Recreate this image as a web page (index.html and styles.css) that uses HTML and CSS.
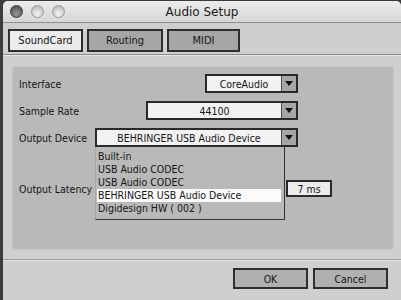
FILE: index.html
```html
<!DOCTYPE html>
<html>
<head>
<meta charset="utf-8">
<link rel="stylesheet" href="styles.css">
</head>
<body>
<div class="screen">
  <div class="edge"></div>
  <div class="window">
    <div class="titlebar">
      <div class="lights">
        <span class="light dark"></span>
        <span class="light"></span>
        <span class="light"></span>
      </div>
      <div class="title">Audio Setup</div>
      <div></div>
    </div>
    <div class="tabs">
      <div class="tab active w1">SoundCard</div>
      <div class="tab w2">Routing</div>
      <div class="tab w3">MIDI</div>
    </div>
    <div class="content">
      <div class="panel">
        <div class="row r1">
          <span class="label">Interface</span>
          <div class="combo c1"><span class="field">CoreAudio</span><span class="arrow"></span></div>
        </div>
        <div class="row r2">
          <span class="label">Sample Rate</span>
          <div class="combo c2"><span class="field">44100</span><span class="arrow"></span></div>
        </div>
        <div class="row r3">
          <span class="label">Output Device</span>
          <div class="combo c3"><span class="field">BEHRINGER USB Audio Device</span><span class="arrow"></span>
            <ul class="menu">
              <li>Built-in</li>
              <li>USB Audio CODEC</li>
              <li>USB Audio CODEC</li>
              <li class="sel">BEHRINGER USB Audio Device</li>
              <li>Digidesign HW ( 002 )</li>
            </ul>
          </div>
        </div>
        <div class="row r4">
          <span class="label">Output Latency</span>
          <div class="box">7 ms</div>
        </div>
      </div>
    </div>
    <div class="footer">
      <div class="btn">OK</div>
      <div class="btn">Cancel</div>
    </div>
  </div>
</div>
</body>
</html>
```
FILE: styles.css
```css
* { box-sizing: border-box; }
html, body { margin: 0; padding: 0; }
body {
  width: 401px; height: 300px; overflow: hidden;
  background: #3a3a3a;
  font-family: "DejaVu Sans Condensed", "DejaVu Sans", sans-serif;
  font-stretch: condensed;
  font-size: 10.5px;
  color: #151515;
}
.screen { display: flex; height: 300px; }
.edge { width: 3px; background: #3c3c3c; }
.window {
  flex: 1;
  display: flex; flex-direction: column;
  background: #cfcfcf;
  border-radius: 5px 5px 0 0;
  margin-top: 1px;
  overflow: hidden;
}
.titlebar {
  height: 22px;
  display: grid;
  grid-template-columns: 1fr auto 1fr;
  align-items: center;
  background: linear-gradient(#ececec, #d6d6d6);
  border-bottom: 1px solid #8e8e8e;
}
.lights { display: flex; gap: 8px; padding-left: 7px; margin-top: -1px; }
.light {
  width: 13px; height: 13px; border-radius: 50%;
  background: radial-gradient(circle at 50% 70%, #f4f4f4, #c4c4c4 70%, #a8a8a8);
  border: 1px solid #9a9a9a;
}
.light.dark {
  background: radial-gradient(circle at 50% 70%, #9a9a9a, #5a5a5a 70%, #444);
  border-color: #3a3a3a;
}
.title {
  font-family: "DejaVu Sans", sans-serif;
  font-stretch: normal;
  font-size: 12px; color: #1a1a1a; padding-top: 1px;
}
.tabs {
  display: flex; gap: 4px;
  padding: 6px 0 0 5px;
  height: 32px;
  border-bottom: 1px solid #8a8a8a;
  box-shadow: 0 1px 0 #e6e6e6;
}
.tab {
  height: 23px;
  border: 2px solid #2e2e2e;
  background: #a6a6a6;
  display: flex; align-items: center; justify-content: center;
  font-size: 11px;
}
.tab.active { background: #ececec; }
.w1 { width: 75px; }
.w2 { width: 76px; }
.w3 { width: 73px; }
.content {
  height: 205px;
  padding: 12px 8px 0 10px;
  border-bottom: 1px solid #9a9a9a;
  box-shadow: 0 1px 0 #e4e4e4;
}
.panel {
  height: 182px;
  background: #b9b9b9;
  border-radius: 3px;
  box-shadow: 0 0 0 1px #c4c4c4;
  padding: 7px 0 0 6px;
  display: flex; flex-direction: column;
}
.row { display: flex; align-items: center; }
.r1, .r2, .r3 { width: 279px; height: 19px; }
.r2, .r3 { margin-top: 8px; }
.r4 { width: 313px; height: 17px; margin-top: 33px; }
.label { flex: none; }
.combo {
  margin-left: auto;
  height: 19px;
  border: 2px solid #2a2a2a;
  display: flex;
  position: relative;
  background: #f2f2f2;
}
.c1 { width: 93px; }
.c2 { width: 152px; }
.c3 { width: 203px; }
.field { flex: 1; display: flex; align-items: center; justify-content: center; }
.arrow {
  width: 15px;
  background: #a6a6a6;
  border-left: 1px solid #4a4a4a;
  position: relative;
}
.arrow::after {
  content: "";
  position: absolute; left: 3px; top: 5px;
  border-left: 4px solid transparent;
  border-right: 4px solid transparent;
  border-top: 5px solid #111;
}
.menu {
  position: absolute;
  left: -2px; top: 17px;
  width: 190px; height: 73px;
  margin: 0; padding: 3px 3px 0 1px;
  list-style: none;
  background: #b9b9b9;
  border-left: 1px solid #a8a8a8;
  border-right: 1px solid #333;
  border-bottom: 1px solid #333;
}
.menu li { height: 13px; line-height: 13px; padding-left: 1px; white-space: nowrap; }
.menu li.sel { background: #fbfbfb; }
.box {
  margin-left: auto;
  width: 46px; height: 17px;
  border: 2px solid #2a2a2a;
  background: #ececec;
  display: flex; align-items: center; justify-content: center;
}
.footer {
  flex: 1;
  display: flex; justify-content: flex-end; align-items: flex-start;
  gap: 5px;
  padding: 8px 13px 0 0;
}
.btn {
  width: 75px; height: 21px;
  border: 2px solid #2e2e2e;
  background: #b0b0b0;
  display: flex; align-items: center; justify-content: center;
}
```
